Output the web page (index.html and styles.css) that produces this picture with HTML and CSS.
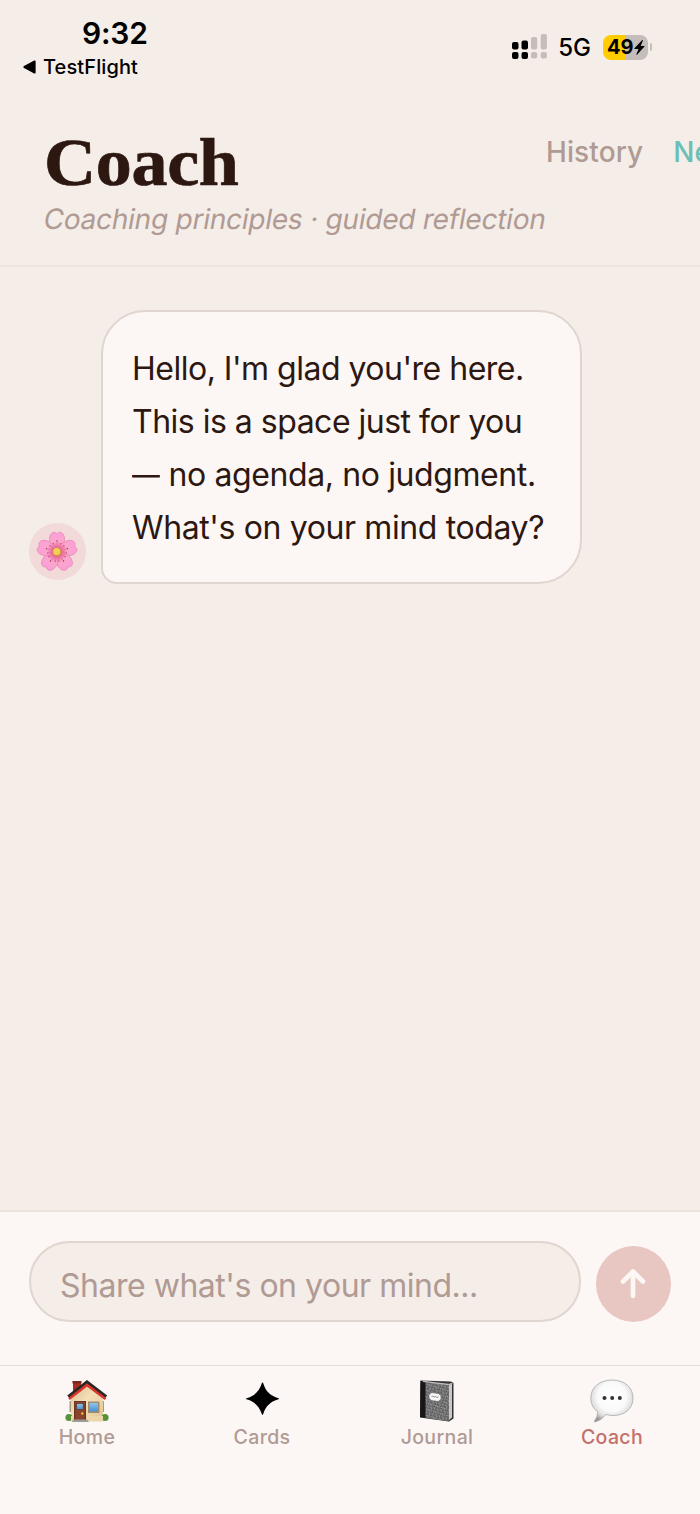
FILE: index.html
```html
<!DOCTYPE html>
<html lang="en">
<head>
<meta charset="utf-8">
<title>Coach</title>
<link rel="stylesheet" href="styles.css">
</head>
<body>
<div class="app">
  <div class="status">
    <div class="status-left">
      <div class="clock"><span>9:32</span></div>
      <div class="back">
        <svg width="13" height="14" viewBox="0 0 13 14"><path d="M11.200.600Q12.600 0 12.600 1.500V12.500Q12.600 14 11.200 13.400L1 7.900Q-.4 7 1 6.100Z"/></svg>
        <span>TestFlight</span>
      </div>
    </div>
    <div class="status-right">
      <svg class="signal" width="36" height="26" viewBox="0 0 36 26">
        <g fill="#000"><rect x="0" y="8" width="6.500" height="7.500" rx="2"/><rect x="9.500" y="6.500" width="6.500" height="9" rx="2"/><rect x="0" y="18" width="6.500" height="7" rx="2"/><rect x="9.500" y="18" width="6.500" height="7" rx="2"/></g>
        <g fill="#c5bdb9"><rect x="19" y="3" width="6.200" height="12.500" rx="2"/><rect x="28.700" y="0" width="6.200" height="15.500" rx="2"/><rect x="19" y="18" width="6.200" height="6.500" rx="2"/><rect x="28.700" y="18" width="6.200" height="6.500" rx="2"/></g>
      </svg>
      <span class="network">5G</span>
      <div class="battery">
        <span>49</span>
        <svg width="11" height="15" viewBox="0 0 11 15"><path d="M8.300 0 .4 8.300Q0 9 .8 9H4.500L2.300 14.500Q2.500 15.100 3 14.700L10.500 6.600Q10.900 6 10.200 5.900H6.700L8.900.4Q8.900-.2 8.300 0Z"/></svg>
      </div>
      <i class="battery-cap"></i>
    </div>
  </div>

  <header class="header">
    <div class="heading">
      <h1><span>Coach</span></h1>
      <p><span>Coaching principles · guided reflection</span></p>
    </div>
    <div class="actions"><span class="history">History</span><span class="new">New</span></div>
  </header>

  <main class="chat">
    <div class="avatar">
      <svg width="42" height="42" viewBox="-21 -21 42 42">
        <defs>
          <radialGradient id="petal" gradientUnits="userSpaceOnUse" cx="0" cy="0" r="21">
            <stop offset="0" stop-color="#c93a6c"/><stop offset=".28" stop-color="#ec76a4"/><stop offset=".5" stop-color="#fba6cb"/><stop offset="1" stop-color="#fb9edb"/>
          </radialGradient>
          <g id="leaf">
            <path d="M0 0C-4-3-8.200-8-7.500-14C-7-18.500-4-20.500-1.600-19.600L0-18.300L1.600-19.600C4-20.500 7-18.500 7.500-14C8.200-8 4-3 0 0Z" fill="url(#petal)" stroke="#e67bb0" stroke-width=".6"/>
            <path d="M0-7V-10M-2-5.500L-3.700-8M2-5.500L3.700-8" stroke="#d65b8c" stroke-width=".4"/>
            <g fill="#9b2a58"><circle cx="0" cy="-11" r=".7"/><circle cx="-3.900" cy="-8.500" r=".55"/><circle cx="3.900" cy="-8.500" r=".55"/></g>
          </g>
        </defs>
        <use href="#leaf"/><use href="#leaf" transform="rotate(72)"/><use href="#leaf" transform="rotate(144)"/><use href="#leaf" transform="rotate(216)"/><use href="#leaf" transform="rotate(288)"/>
        <circle r="4.400" fill="#d5943a"/><circle r="3.500" cx="-.3" cy="-.4" fill="#f3d052"/>
      </svg>
    </div>
    <div class="bubble">
      <span>Hello, I'm glad you're here.</span><br>
      <span>This is a space just for you</span><br>
      <span class="pause"><span class="dash">—</span> no agenda, no judgment.</span><br>
      <span class="question">What's on your mind today?</span>
    </div>
  </main>

  <div class="composer">
    <div class="field"><span>Share what's on your mind...</span></div>
    <div class="send">
      <svg width="26" height="32" viewBox="0 0 26 32"><path d="M13 28V4M3 13.500 13 3.500 23 13.500" fill="none" stroke="#fcf6f4" stroke-width="4.700" stroke-linecap="round" stroke-linejoin="round"/></svg>
    </div>
  </div>

  <nav class="tabs">
    <div class="tab">
      <svg width="44" height="44" viewBox="0 0 44 44">
        <defs><linearGradient id="wall" x1="0" y1="0" x2="1" y2="1"><stop offset="0" stop-color="#d9bd8b"/><stop offset=".45" stop-color="#f3dfb8"/><stop offset="1" stop-color="#dfc594"/></linearGradient>
        <linearGradient id="pane" x1="0" y1="0" x2="0" y2="1"><stop offset="0" stop-color="#8bc6ef"/><stop offset="1" stop-color="#4a91cd"/></linearGradient></defs>
        <path d="M8 3H16V12L8 18Z" fill="#a52d23"/><path d="M7.500 2H16.500V4.500H7.500Z" fill="#7d241c"/>
        <path d="M4.500 22H39V33H4.500Z" fill="#ac9a7d"/>
        <path d="M22 6 38 20V42H6V20Z" fill="url(#wall)"/>
        <path d="M3.500 18 22 3.500 41 18" fill="none" stroke="#292725" stroke-width="4"/>
        <path d="M4 20 22 6 40.500 20" fill="none" stroke="#d8352d" stroke-width="2.600"/>
        <circle cx="4" cy="38.500" r="3.600" fill="#57923a"/><circle cx="40" cy="38.500" r="3.600" fill="#57923a"/>
        <path d="M6 37H38V42.500H6Z" fill="#ecd5a8"/>
        <rect x="9" y="22" width="12" height="19" fill="#6b3222"/><rect x="10.300" y="23" width="9.400" height="18" fill="#8a432d"/>
        <rect x="11.700" y="24.500" width="6.500" height="6" fill="url(#pane)" stroke="#623321" stroke-width=".7"/><circle cx="17.300" cy="34.500" r="1.200" fill="#f4bf42"/>
        <rect x="23" y="22.500" width="11.500" height="11.500" fill="#a28b70"/><rect x="24.500" y="24" width="8.500" height="8.500" fill="url(#pane)"/>
        <path d="M8 40.500H22L24 43H7Z" fill="#9c9c95"/>
      </svg>
      <span>Home</span>
    </div>
    <div class="tab">
      <svg width="44" height="44" viewBox="0 0 44 44"><path d="M22.500 3.500Q23 3.500 23.400 4.800C25.500 12 30.500 17 37.700 18.900Q39 19.200 39 19.700Q39 20.200 37.700 20.500C30.500 22.500 25.500 27.500 23.400 34.600Q23 35.900 22.500 35.900Q22 35.900 21.600 34.600C19.500 27.500 14.500 22.500 7.300 20.500Q6 20.200 6 19.700Q6 19.200 7.300 18.900C14.500 17 19.500 12 21.600 4.800Q22 3.500 22.500 3.500Z"/></svg>
      <span>Cards</span>
    </div>
    <div class="tab">
      <svg width="44" height="44" viewBox="0 0 44 44">
        <defs><pattern id="marble" width="7" height="6" patternUnits="userSpaceOnUse" patternTransform="rotate(17)"><rect width="7" height="6" fill="#606060"/><path d="M0 1h1.500v1H3V0M4 3l2-2 1 2M1 5l2-1 1 2H2M5 4h2v1H6" stroke="#bdbdbd" stroke-width=".7" fill="#2c2c2c"/></pattern></defs>
        <path d="M5.500 1.500 36 2.500 38.500 4V39.500L34 42.500 5 38.500Z" fill="#333"/>
        <path d="M33 6 37 4.500V38.500L34 41Z" fill="#c9c9c9"/>
        <path d="M5.500 2 34 6V42.500L5 38Z" fill="url(#marble)"/>
        <path d="M5.500 2 10.500 2.800V38.900L5 38Z" fill="#171717"/>
        <path d="M8 2.300 33.500 5.500 37.300 4.300" fill="none" stroke="#bbb" stroke-width="1.300"/>
        <path d="M16 13.500 24 14.500Q24.200 16 26 16.500V20.500Q24 21 23.500 22.500L16 21.500Q15.500 20 14 19.500V15.500Q15.500 15 16 13.500Z" fill="#f7f7f7" stroke="#555" stroke-width=".6"/>
        <path d="M16.500 17.500 18 17 19 18.200 20.500 17.500 22 18.500 23.500 18" fill="none" stroke="#777" stroke-width=".8"/>
      </svg>
      <span>Journal</span>
    </div>
    <div class="tab active">
      <svg width="44" height="44" viewBox="0 0 44 44">
        <defs><radialGradient id="speech" cx=".5" cy=".4" r=".62"><stop offset="0" stop-color="#fff"/><stop offset=".55" stop-color="#fafafa"/><stop offset=".8" stop-color="#dedede"/><stop offset="1" stop-color="#999"/></radialGradient></defs>
        <path d="M22 1C34 1 43 8 43 19C43 30 34.500 36.500 23 36.500Q19 36.500 16 35.500Q11.500 41.500 5 43Q3.700 43 4.500 41.800Q8 37.500 7.600 32.500Q.8 28 .8 19C.8 8 10 1 22 1Z" fill="url(#speech)" stroke="#aaa" stroke-width=".8"/>
        <g fill="#333"><circle cx="14.500" cy="19" r="2"/><circle cx="22.200" cy="19" r="2"/><circle cx="29.800" cy="19" r="2"/></g>
      </svg>
      <span>Coach</span>
    </div>
  </nav>
</div>
</body>
</html>
```
FILE: styles.css
```css
* { box-sizing: border-box; }
body { margin: 0; background: #f5ede8; font-family: Inter, sans-serif; }
.app { width: 700px; height: 1514px; overflow: hidden; display: flex; flex-direction: column; }
svg { display: block; flex: none; }
span { white-space: nowrap; }
.status { height: 100px; display: flex; justify-content: space-between; padding: 14px 48px 0 23px; }
.clock { font-size: 30px; line-height: 38px; font-weight: 600; padding-left: 59px; letter-spacing: -.2px; }
.back { display: flex; align-items: center; gap: 7px; font-size: 20px; line-height: 30px; font-weight: 500; letter-spacing: .1px; }
.status-right { display: flex; height: 26px; margin-top: 20px; align-items: center; }
.network { font-size: 24px; font-weight: 500; margin-left: 10px; }
.battery { width: 45px; height: 25px; margin-left: 12px; border-radius: 8px; display: flex; align-items: center; padding-left: 4px; background: linear-gradient(90deg, #ffcc00 49%, #c5bdb9 49%); font-size: 20px; font-weight: 700; }
.battery-cap { width: 2px; height: 8px; margin-left: 2px; border-radius: 0 3px 3px 0; background: #c5bdb9; }
.header { height: 167px; display: flex; padding: 27px 0 0 44px; border-bottom: 2px solid #ede4df; }
.heading { width: 502px; flex: none; }
h1 { margin: 0; font: 700 68px/70px "Liberation Serif", serif; color: #2c1810; }
h1 span { display: inline-block; transform: scaleX(1.06); transform-origin: left; letter-spacing: -.3px; -webkit-text-stroke: .7px #2c1810; }
.heading p { margin: 4px 0 0; font-size: 28px; line-height: 36px; color: #b09a94; }
.heading p span { display: inline-block; transform: skewX(-10deg); letter-spacing: -.24px; }
.actions { display: flex; gap: 30px; padding-top: 8px; font-size: 28px; line-height: 34px; font-weight: 450; color: #b09a94; letter-spacing: .1px; }
.new { color: #6bbfb5; font-weight: 500; }
.chat { height: 943px; display: flex; align-items: flex-start; padding: 43px 29px 0; gap: 15px; }
.avatar { width: 57px; height: 57px; border-radius: 50%; background: #f1dad8; margin-top: 213px; display: flex; align-items: center; justify-content: center; padding-right: 1px; }
.bubble { width: 481px; height: 274px; padding: 30px 29px; background: #fcf6f4; border: 2px solid #e0d5cf; border-radius: 44px 44px 44px 16px; font-size: 32px; line-height: 53px; color: #2c1810; letter-spacing: -.5px; }
.pause { letter-spacing: -.4px; }
.dash { display: inline-block; width: 28px; transform: scaleX(.87); transform-origin: left; }
.question { letter-spacing: -.38px; }
.composer { height: 155px; background: #fcf6f4; border-top: 2px solid #ede3de; display: flex; padding: 29px 29px 0; gap: 15px; }
.field { width: 552px; height: 81px; border-radius: 41px; border: 2px solid #e0d5cf; background: #f5ede8; padding: 5px 29px 0; font-size: 32px; line-height: 76px; color: #b09a94; letter-spacing: -.48px; }
.send { width: 75px; height: 76px; border-radius: 50%; background: #e8c6c1; margin-top: 5px; display: flex; align-items: center; justify-content: center; padding-right: 1px; }
.tabs { height: 149px; background: #fcf6f4; border-top: 1px solid #e8dfda; display: grid; grid-template-columns: repeat(4, 175px); }
.tab { display: flex; flex-direction: column; align-items: center; padding: 13px 1px 0 0; font-size: 19.5px; line-height: 26px; font-weight: 500; color: #b09a94; letter-spacing: .35px; }
.tab span { margin-top: 1px; }
.active { color: #c4706a; }
```
